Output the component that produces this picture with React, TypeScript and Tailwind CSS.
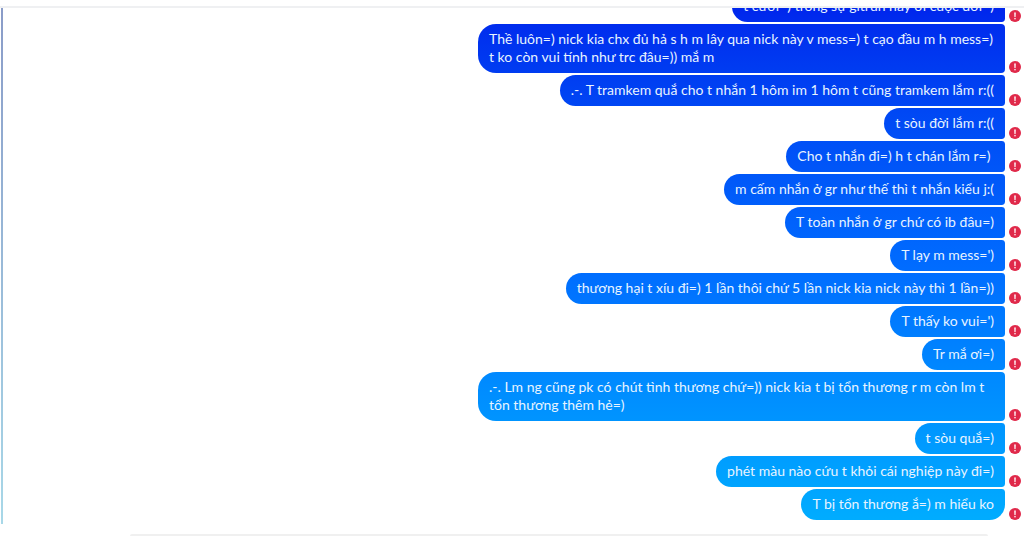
import React from "react";

type Message = {
  id: number;
  lines: string[];
};

const messages: Message[] = [
  { id: 1, lines: ["t cười=) trong sự gltrun này ơi cuộc đời=)"] },
  {
    id: 2,
    lines: [
      "Thề luôn=) nick kia chx đủ hả s h m lây qua nick này v mess=) t cạo đầu m h mess=)",
      "t ko còn vui tính như trc đâu=)) mắ m",
    ],
  },
  { id: 3, lines: [".-. T tramkem quắ cho t nhắn 1 hôm im 1 hôm t cũng tramkem lắm r:(("] },
  { id: 4, lines: ["t sòu đời lắm r:(("] },
  { id: 5, lines: ["Cho t nhắn đi=) h t chán lắm r=)\u00a0"] },
  { id: 6, lines: ["m cấm nhắn ở gr như thế thì t nhắn kiểu j:("] },
  { id: 7, lines: ["T toàn nhắn ở gr chứ có ib đâu=)"] },
  { id: 8, lines: ["T lạy m mess=')"] },
  { id: 9, lines: ["thương hại t xíu đi=) 1 lần thôi chứ 5 lần nick kia nick này thì 1 lần=))"] },
  { id: 10, lines: ["T thấy ko vui=')"] },
  { id: 11, lines: ["Tr mắ ơi=)"] },
  {
    id: 12,
    lines: [
      ".-. Lm ng cũng pk có chút tình thương chứ=)) nick kia t bị tổn thương r m còn lm t",
      "tổn thương thêm hẻ=)",
    ],
  },
  { id: 13, lines: ["t sòu quắ=)"] },
  { id: 14, lines: ["phét màu nào cứu t khỏi cái nghiệp này đi=)"] },
  { id: 15, lines: ["T bị tổn thương ắ=) m hiểu ko"] },
];

const ErrorIcon = () => (
  <svg
    viewBox="0 0 12 12"
    className="size-3 shrink-0"
    role="img"
    aria-label="Không gửi được"
  >
    <circle cx="6" cy="6" r="6" fill="#e0294a" />
    <path d="M5 2.6h2l-.3 4.3H5.3z" fill="#fbd5dc" />
    <circle cx="6" cy="8.6" r=".9" fill="#fbd5dc" />
  </svg>
);

const MessageRow = ({ message, last }: { message: Message; last: boolean }) => {
  return (
    <li className="flex items-end justify-end gap-1">
      {/* fixed background: one gradient runs through all the bubbles */}
      <div
        className={`rounded-l-[18px] rounded-tr-[4px] bg-linear-to-b from-[#0022ec] via-[#006cff] to-[#00b0ff] bg-fixed px-[11px] pt-[6px] pb-[7px] text-[14px] leading-[18px] text-[#e8f4ff] ${
          last ? "rounded-br-[18px]" : "rounded-br-[4px]"
        } ${message.lines.length > 1 ? "w-[527px]" : "max-w-[527px]"}`}
      >
        {message.lines.map((line) => (
          <p key={line} className="whitespace-nowrap">
            {line}
          </p>
        ))}
      </div>
      <ErrorIcon />
    </li>
  );
};

const App = () => {
  return (
    <div className="flex h-screen flex-col bg-white font-['Lato','Noto_Sans',sans-serif]">
      <header className="h-2 shrink-0 border-b-2 border-[#eff0f2]" />
      <div className="flex min-h-0 flex-1 pl-px">
        <div className="w-[2px] shrink-0 bg-linear-to-b from-[#8a9cc8] to-[#a8d8e8]" />
        <main className="flex min-w-0 flex-1 flex-col justify-end overflow-hidden pr-[3px] pb-1">
          <ul className="flex flex-col gap-[2px]">
            {messages.map((message, i) => (
              <MessageRow
                key={message.id}
                message={message}
                last={i === messages.length - 1}
              />
            ))}
          </ul>
        </main>
      </div>
      <footer className="flex h-3 shrink-0 items-end pr-9 pl-[130px]">
        <div className="h-[2px] flex-1 rounded-t-full bg-[#f0f0f0]" />
      </footer>
    </div>
  );
};

export default App;
